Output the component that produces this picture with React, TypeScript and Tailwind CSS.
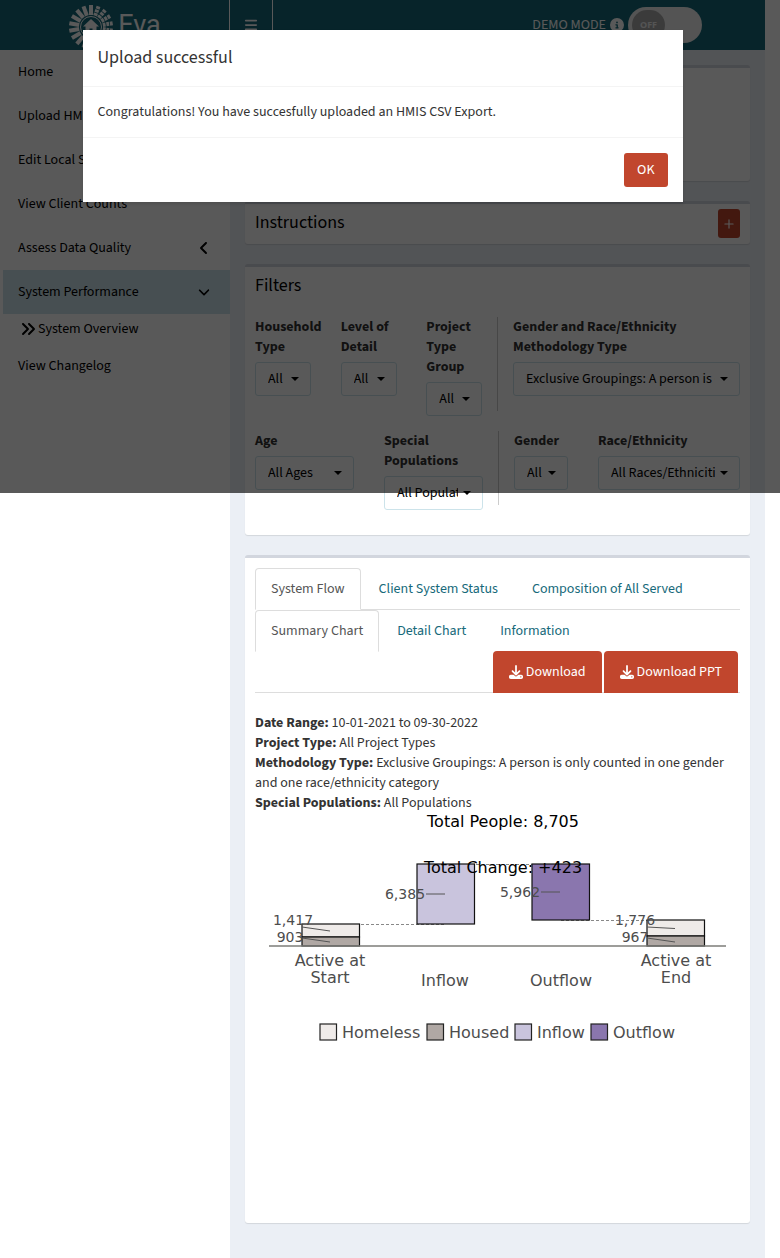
import type { ReactNode } from "react";
import { FaAngleDown, FaAngleLeft, FaAnglesRight, FaBars, FaCircleInfo, FaDownload } from "react-icons/fa6";
import { Plus } from "lucide-react";

function Logo() {
  const rays = Array.from({ length: 18 }, (_, i) => i * 20);
  return (
    <svg viewBox="0 0 46 46" className="mt-1 h-[46px] w-[46px]" fill="none" stroke="#fff" aria-hidden="true">
      {rays.map((angle) => (
        <path
          key={angle}
          d="M23 11V1"
          strokeWidth="4"
          strokeDasharray={angle > 0 && angle < 180 ? "2.8 0.8 2.8 0.8 2.8" : undefined}
          transform={`rotate(${angle} 23 23)`}
        />
      ))}
      <circle cx="23" cy="23" r="10.500" strokeWidth="1" />
      <path d="M23 15l8 7.500h-2.500v6h-4v-4h-3v4h-4v-6H15z" fill="#fff" stroke="none" />
    </svg>
  );
}

function Header() {
  return (
    <header className="flex h-[50px] bg-[#16697a] text-white">
      <a href="#home" className="flex w-[230px] shrink-0 items-center justify-center gap-1 border-r border-white">
        <Logo />
        <span className="font-[Roboto,sans-serif] text-[27px] leading-8">Eva</span>
      </a>
      <button aria-label="Toggle navigation" className="flex w-[43px] items-center justify-center border-r border-white">
        <FaBars size={14} />
      </button>
      <div className="flex grow items-center justify-end gap-1 pr-[63px]">
        <span>DEMO MODE</span>
        <FaCircleInfo size={14} />
        <button
          role="switch"
          aria-checked="false"
          aria-label="Demo mode"
          className="flex h-9 w-[74px] items-center rounded-full bg-[#f0f0f0] pl-1"
        >
          <span className="flex h-[30px] w-[33px] items-center justify-center rounded-full bg-[#aaa] font-['Open_Sans',sans-serif] text-[9px] font-bold text-[#f0f0f0]">
            OFF
          </span>
        </button>
      </div>
    </header>
  );
}

function MenuItem({ children, active, icon }: { children: ReactNode; active?: boolean; icon?: ReactNode }) {
  return (
    <li className="pl-[3px]">
      <a
        href="#menu"
        className={`flex h-11 items-center justify-between pr-[19px] pl-[15px] ${active ? "bg-[#cce3ea]" : ""}`}
      >
        {children}
        {icon && <span className="flex w-3.5 justify-center">{icon}</span>}
      </a>
    </li>
  );
}

function Sidebar() {
  return (
    <nav className="w-[230px] shrink-0 bg-white text-black">
      <ul>
        <MenuItem>Home</MenuItem>
        <MenuItem>Upload HMIS CSV Export</MenuItem>
        <MenuItem>Edit Local Settings</MenuItem>
        <MenuItem>View Client Counts</MenuItem>
        <MenuItem icon={<FaAngleLeft size={16} className="shrink-0" />}>Assess Data Quality</MenuItem>
        <MenuItem active icon={<FaAngleDown size={14} className="shrink-0" />}>
          System Performance
        </MenuItem>
        <li>
          <a href="#overview" className="flex h-[30px] items-center gap-0.5 pl-5">
            <FaAnglesRight size={16} />
            System Overview
          </a>
        </li>
        <MenuItem>View Changelog</MenuItem>
      </ul>
    </nav>
  );
}

function Card({ children, className = "" }: { children?: ReactNode; className?: string }) {
  return (
    <section
      className={`rounded-[3px] border-t-[3px] border-[#d2d6de] bg-white px-[10px] shadow-[0_1px_1px_rgba(0,0,0,0.1)] ${className}`}
    >
      {children}
    </section>
  );
}

function Picker({ id, label, value, width }: { id: string; label: string; value: string; width: string }) {
  return (
    <div className="min-w-0">
      <label htmlFor={id} className="mb-[5px] block font-bold">
        {label}
      </label>
      <div className={`relative ${width}`}>
        <select
          id={id}
          className="h-[34px] w-full appearance-none rounded-[3px] border border-[#cce3ea] bg-white pr-6 pl-3 text-black"
        >
          <option>{value}</option>
        </select>
        <svg viewBox="0 0 8 4" className="pointer-events-none absolute top-[15px] right-3 h-1 w-2" aria-hidden="true">
          <path d="M0 0h8L4 4z" fill="#000" />
        </svg>
      </div>
    </div>
  );
}

function Filters() {
  return (
    <Card className="pb-[30px]">
      <h2 className="py-[9px] text-lg leading-5 text-black">Filters</h2>
      <div className="mt-3 grid grid-cols-[243fr_242fr] items-start">
        <div className="grid h-[94px] grid-cols-[86fr_86fr_71fr] border-r border-[#ccc]">
          <Picker id="household" label="Household Type" value="All" width="w-14" />
          <Picker id="detail" label="Level of Detail" value="All" width="w-14" />
          <div className="pr-[15px]">
            <Picker id="project" label="Project Type Group" value="All" width="w-full" />
          </div>
        </div>
        <div className="pl-[15px]">
          <div className="max-w-[240px]">
            <Picker
              id="methodology"
              label="Gender and Race/Ethnicity Methodology Type"
              value="Exclusive Groupings: A person is only counted in one gender and one race/ethnicity category"
              width="w-full"
            />
          </div>
        </div>
      </div>
      <div className="mt-5 grid grid-cols-[244fr_241fr] items-start">
        <div className="grid h-[74px] grid-cols-2 gap-[30px] border-r border-[#ccc] pr-[15px]">
          <Picker id="age" label="Age" value="All Ages" width="w-full" />
          <Picker id="populations" label="Special Populations" value="All Populations" width="w-full" />
        </div>
        <div className="grid grid-cols-[54fr_142fr] gap-[30px] pl-[15px]">
          <Picker id="gender" label="Gender" value="All" width="w-full" />
          <Picker id="race" label="Race/Ethnicity" value="All Races/Ethnicities" width="w-full" />
        </div>
      </div>
    </Card>
  );
}

function Tab({ children, active }: { children: ReactNode; active?: boolean }) {
  return (
    <li className="mr-0.5 -mb-px">
      <a
        href="#tab"
        className={`block rounded-t border px-[15px] py-[10px] ${
          active ? "border-[#ddd] border-b-white bg-white text-[#555]" : "border-transparent text-[#16697a]"
        }`}
      >
        {children}
      </a>
    </li>
  );
}

function DownloadButton({ children }: { children: ReactNode }) {
  return (
    <button className="mr-0.5 flex h-[42px] items-center gap-[3px] rounded-t bg-[#c1462d] px-4 text-white">
      <FaDownload size={14} />
      {children}
    </button>
  );
}

const bars = [
  { x: 47, y: 111, h: 13, fill: "#efebe9" },
  { x: 47, y: 124, h: 9, fill: "#b0a8a4" },
  { x: 162, y: 51, h: 60, fill: "#c9c4dd" },
  { x: 277, y: 51, h: 56, fill: "#8a76ae" },
  { x: 392, y: 107, h: 16, fill: "#efebe9" },
  { x: 392, y: 123, h: 10, fill: "#b0a8a4" },
];

const legend = [
  { x: 65, label: "Homeless", fill: "#efebe9" },
  { x: 172, label: "Housed", fill: "#b0a8a4" },
  { x: 260, label: "Inflow", fill: "#c9c4dd" },
  { x: 336, label: "Outflow", fill: "#8a76ae" },
];

function Chart() {
  return (
    <svg
      viewBox="0 0 485 400"
      className="block w-full font-['DejaVu_Sans',sans-serif]"
      role="img"
      aria-label="System flow summary"
    >
      <g stroke="#888" strokeDasharray="3 2">
        <path d="M76 111.500H191" />
        <path d="M191 51.500H306" />
        <path d="M306 107.500H421" />
      </g>
      {bars.map((b) => (
        <rect key={`${b.x}-${b.y}`} x={b.x} y={b.y} width="57.500" height={b.h} fill={b.fill} stroke="#111" strokeWidth="1.200" />
      ))}
      <path d="M14 133H471" stroke="#7d7d78" strokeWidth="1.500" />
      <g stroke="#555">
        <path d="M171 81h19M286 79h19M47 114l28 4M47 125l28 4M392 114l28 1.500M392 125l28 4" />
      </g>
      <g fill="#4d4d4d" fontSize="14" textAnchor="middle">
        <text x="38" y="112">1,417</text>
        <text x="35" y="129">903</text>
        <text x="150" y="86">6,385</text>
        <text x="265" y="84">5,962</text>
        <text x="380" y="112">1,776</text>
        <text x="380" y="129">967</text>
      </g>
      <g fill="#000" fontSize="16" textAnchor="middle">
        <text x="248" y="14">Total People: 8,705</text>
        <text x="248" y="60">Total Change: +423</text>
      </g>
      <g fill="#4d4d4d" fontSize="16" textAnchor="middle">
        <text x="75" y="153">Active at</text>
        <text x="75" y="170">Start</text>
        <text x="190" y="173">Inflow</text>
        <text x="306" y="173">Outflow</text>
        <text x="421" y="153">Active at</text>
        <text x="421" y="170">End</text>
      </g>
      {legend.map((item) => (
        <g key={item.label}>
          <rect x={item.x} y="211" width="16.500" height="16" fill={item.fill} stroke="#222" strokeWidth="1.200" />
          <text x={item.x + 22} y="225" fontSize="16" fill="#4d4d4d">
            {item.label}
          </text>
        </g>
      ))}
    </svg>
  );
}

function Results() {
  return (
    <Card className="pt-[10px] pb-[10px]">
      <ul className="flex flex-wrap border-b border-[#ddd]">
        <Tab active>System Flow</Tab>
        <Tab>Client System Status</Tab>
        <Tab>Composition of All Served</Tab>
      </ul>
      <ul className="flex flex-wrap border-b border-[#ddd]">
        <Tab active>Summary Chart</Tab>
        <Tab>Detail Chart</Tab>
        <Tab>Information</Tab>
        <li className="-mb-px flex w-full justify-end">
          <DownloadButton>Download</DownloadButton>
          <DownloadButton>Download PPT</DownloadButton>
        </li>
      </ul>
      <div className="mt-5">
        <p>
          <b>Date Range:</b> 10-01-2021 to 09-30-2022
        </p>
        <p>
          <b>Project Type:</b> All Project Types
        </p>
        <p>
          <b>Methodology Type:</b> Exclusive Groupings: A person is only counted in one gender and one race/ethnicity
          category
        </p>
        <p>
          <b>Special Populations:</b> All Populations
        </p>
      </div>
      <Chart />
    </Card>
  );
}

function UploadDialog() {
  return (
    <div className="absolute inset-x-0 top-0 h-[493px] bg-black/65 pt-[30px] pr-[15px]">
      <div role="dialog" aria-labelledby="dialog-title" className="mx-auto max-w-[600px] bg-white shadow-[0_2px_3px_rgba(0,0,0,0.12)]">
        <h1 id="dialog-title" className="border-b border-[#f4f4f4] px-[15px] py-[18px] text-lg leading-5">
          Upload successful
        </h1>
        <p className="px-[15px] py-[15px]">Congratulations! You have succesfully uploaded an HMIS CSV Export.</p>
        <div className="flex justify-end border-t border-[#f4f4f4] p-[15px]">
          <button className="h-[34px] rounded-[3px] bg-[#c1462d] px-[13px] text-white">OK</button>
        </div>
      </div>
    </div>
  );
}

export default function App() {
  return (
    <div className="relative bg-white font-['Source_Sans_Pro','Source_Sans_3','Noto_Sans_CJK_SC',sans-serif] text-sm leading-5 text-[#333]">
      <div className="pr-[15px]">
        <Header />
        <div className="flex">
          <Sidebar />
          <main className="flex min-w-0 grow flex-col gap-5 bg-[#ebeff5] px-[15px] pt-[15px] pb-[35px]">
            <Card className="h-[116px]" />
            <Card className="flex items-start justify-between pt-[5px] pb-[6px]">
              <h2 className="pt-1 text-lg leading-5 text-black">Instructions</h2>
              <button
                aria-label="Expand instructions"
                className="flex h-[29px] w-[22px] items-center justify-center rounded-[3px] bg-[#c1462d] text-white"
              >
                <Plus size={14} strokeWidth={2} />
              </button>
            </Card>
            <Filters />
            <Results />
          </main>
        </div>
      </div>
      <UploadDialog />
    </div>
  );
}
